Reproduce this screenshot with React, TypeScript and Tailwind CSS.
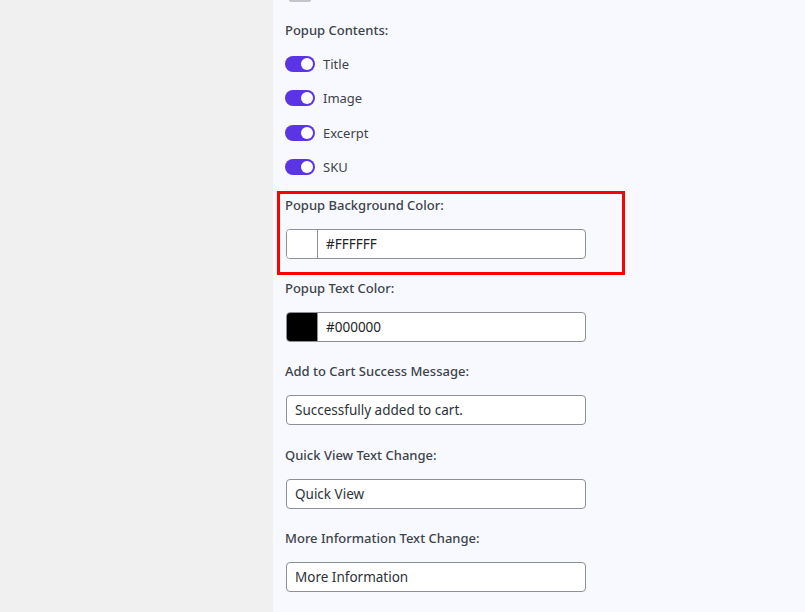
import { useState } from "react";

const font = { fontFamily: '"Noto Sans", "Open Sans", Arial, sans-serif' };

function Toggle({ label }: { label: string }) {
  const [on, setOn] = useState(true);
  return (
    <div className="flex items-center h-[34.5px]">
      <button
        type="button"
        onClick={() => setOn(!on)}
        aria-pressed={on}
        className={`relative w-[30px] h-[16px] rounded-full shrink-0 ${on ? "bg-[#5b34e5]" : "bg-[#c3c4c7]"}`}
      >
        <span
          className={`absolute top-[2px] w-[12px] h-[12px] rounded-full bg-white ${on ? "left-[16px]" : "left-[2px]"}`}
        />
      </button>
      <span className="ml-[8px] text-[13px] leading-5 text-[#3c434a]">{label}</span>
    </div>
  );
}

function Label({ children }: { children: string }) {
  return <p className="h-5 text-[13px] leading-5 font-medium text-[#3c434a]">{children}</p>;
}

function ColorField({ label, value, swatch }: { label: string; value: string; swatch: string }) {
  return (
    <div>
      <Label>{label}</Label>
      <div className="mt-[14px] ml-[1px] flex w-[300px] h-[30px] rounded-[4px] border border-[#8c8f94] bg-white overflow-hidden">
        <div className={`w-[31px] h-full border-r border-[#8c8f94] ${swatch}`} />
        <input
          defaultValue={value}
          className="flex-1 min-w-0 pl-[8px] text-[13.5px] text-[#1d2327] bg-transparent outline-none"
          style={font}
        />
      </div>
    </div>
  );
}

function TextField({ label, value }: { label: string; value: string }) {
  return (
    <div>
      <Label>{label}</Label>
      <input
        defaultValue={value}
        className="mt-[14px] ml-[1px] block w-[300px] h-[30px] px-[8px] rounded-[4px] border border-[#8c8f94] bg-white text-[13.5px] text-[#2c3338] outline-none"
        style={font}
      />
    </div>
  );
}

export default function App() {
  return (
    <div className="flex w-full h-[612px] overflow-hidden" style={font}>
      <div className="w-[273px] shrink-0 bg-[#f0f0f1]" />
      <div className="flex-1 bg-[#f8f9fe] pl-[12px]">
        <div className="ml-[4px] w-[22px] h-[2px] rounded-b bg-[#c3c4c7]" />

        <div className="mt-[18px]">
          <Label>Popup Contents:</Label>
          <div className="mt-[6.5px] flex flex-col">
            <Toggle label="Title" />
            <Toggle label="Image" />
            <Toggle label="Excerpt" />
            <Toggle label="SKU" />
          </div>
        </div>

        <div className="relative mt-[10.5px]">
          <ColorField label="Popup Background Color:" value="#FFFFFF" swatch="bg-white" />
          {/* highlight annotation */}
          <div className="absolute -left-[8px] -top-[4px] w-[348px] h-[84px] border-[3px] border-[#ff0000] pointer-events-none" />
        </div>

        <div className="mt-[19px]">
          <ColorField label="Popup Text Color:" value="#000000" swatch="bg-black" />
        </div>
        <div className="mt-[19px]">
          <TextField label="Add to Cart Success Message:" value="Successfully added to cart." />
        </div>
        <div className="mt-[20px]">
          <TextField label="Quick View Text Change:" value="Quick View" />
        </div>
        <div className="mt-[19px]">
          <TextField label="More Information Text Change:" value="More Information" />
        </div>
      </div>
    </div>
  );
}
